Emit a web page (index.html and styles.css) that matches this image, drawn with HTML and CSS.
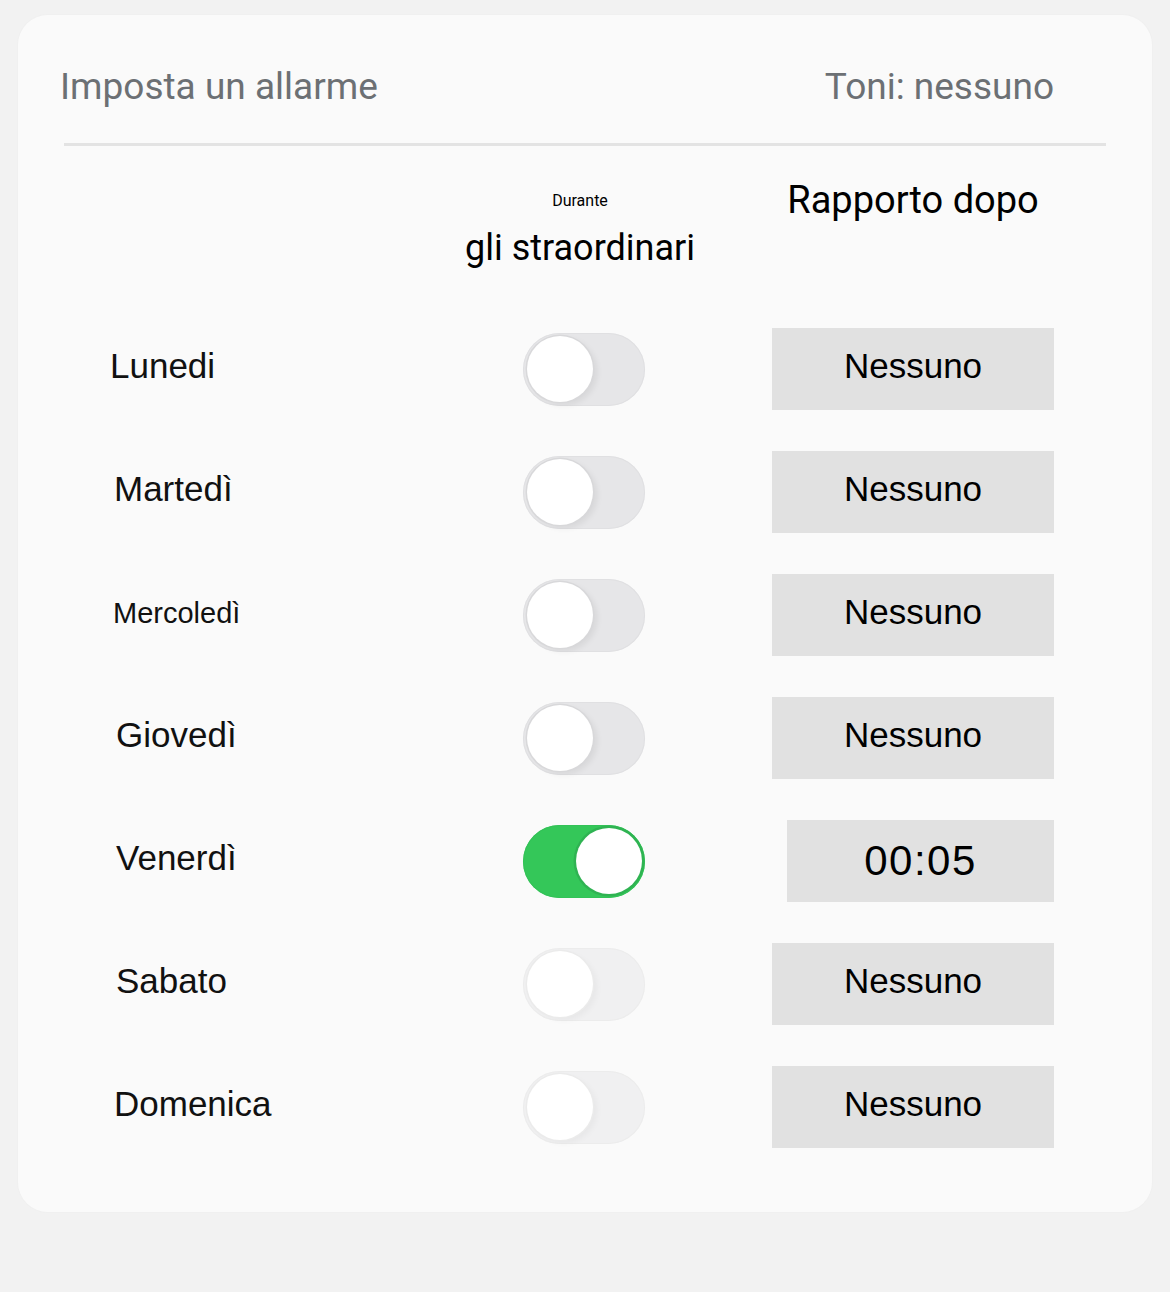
FILE: index.html
```html
<!DOCTYPE html>
<html lang="it">
<head>
<meta charset="utf-8">
<title>Imposta un allarme</title>
<link rel="stylesheet" href="styles.css">
</head>
<body>
<main class="card">
  <header class="card-header">
    <h1 class="title">Imposta un allarme</h1>
    <span class="tones">Toni: nessuno</span>
  </header>
  <div class="divider"></div>
  <section class="table">
    <div class="head">
      <div class="head-cell head-toggle">
        <div class="head-small">Durante</div>
        <div class="head-large">gli straordinari</div>
      </div>
      <div class="head-cell head-report">Rapporto dopo</div>
    </div>
    <div class="rows">
      <div class="row">
        <span class="day day--lun">Lunedi</span>
        <span class="toggle"></span>
        <span class="btn">Nessuno</span>
      </div>
      <div class="row">
        <span class="day">Martedì</span>
        <span class="toggle"></span>
        <span class="btn">Nessuno</span>
      </div>
      <div class="row">
        <span class="day day--small">Mercoledì</span>
        <span class="toggle"></span>
        <span class="btn">Nessuno</span>
      </div>
      <div class="row">
        <span class="day day--wide">Giovedì</span>
        <span class="toggle"></span>
        <span class="btn">Nessuno</span>
      </div>
      <div class="row">
        <span class="day day--wide">Venerdì</span>
        <span class="toggle toggle--on"></span>
        <span class="btn btn--time">00:05</span>
      </div>
      <div class="row">
        <span class="day day--wide">Sabato</span>
        <span class="toggle toggle--faded"></span>
        <span class="btn">Nessuno</span>
      </div>
      <div class="row">
        <span class="day">Domenica</span>
        <span class="toggle toggle--faded"></span>
        <span class="btn">Nessuno</span>
      </div>
    </div>
  </section>
</main>
</body>
</html>
```

FILE: styles.css
```css
* { box-sizing: border-box; }

html, body {
  margin: 0;
  padding: 0;
}

body {
  background: #f2f2f2;
  width: 1170px;
  height: 1292px;
  padding: 15px 18px 0 18px;
  font-family: Roboto, "Liberation Sans", Arial, sans-serif;
}

.card {
  width: 1134px;
  height: 1197px;
  background: #fafafa;
  border-radius: 30px;
  box-shadow: 0 0 0 1px #f0f0f0;
}

.card-header {
  display: flex;
  justify-content: space-between;
  align-items: center;
  padding: 48px 98px 0 42px;
  height: 96px;
}

.title {
  margin: 0;
  font-weight: 400;
  font-size: 37px;
  line-height: 48px;
  color: #6c7074;
}

.tones {
  font-size: 37px;
  line-height: 48px;
  color: #6c7074;
}

.divider {
  margin: 32px 46px 0 46px;
  height: 3px;
  background: #e3e3e3;
}

.table {
  padding: 0 98px 0 96px;
}

.head {
  display: grid;
  grid-template-columns: 409px 122px 409px;
  height: 182px;
  color: #000;
}

.head-toggle {
  grid-column: 2;
  justify-self: center;
  margin-right: 8px;
  padding-top: 45px;
  text-align: center;
  white-space: nowrap;
}

.head-small {
  font-size: 16px;
  line-height: 20px;
}

.head-large {
  margin-top: 15px;
  font-size: 36px;
  line-height: 44px;
}

.head-report {
  grid-column: 3;
  justify-self: end;
  width: 282px;
  padding-top: 31px;
  text-align: center;
  font-size: 38px;
  line-height: 46px;
  white-space: nowrap;
}

.rows {
  display: flex;
  flex-direction: column;
  gap: 41px;
}

.row {
  display: grid;
  grid-template-columns: 409px 122px 409px;
  align-items: center;
  height: 82px;
}

.day {
  font-family: "Liberation Sans", Arial, sans-serif;
  font-size: 35px;
  color: #111;
  margin-bottom: 6px;
}

.day--lun { margin-left: -4px; }
.day--small { font-size: 29px; margin-left: -1px; margin-bottom: 4px; }
.day--wide { margin-left: 2px; }

.toggle {
  position: relative;
  display: block;
  width: 122px;
  height: 73px;
  border-radius: 37px;
  background: #e6e6e8;
  box-shadow: inset 0 0 0 1px #e0e0e2;
}

.toggle::after {
  content: "";
  position: absolute;
  left: 4px;
  top: 3px;
  width: 66px;
  height: 66px;
  border-radius: 50%;
  background: #ffffff;
  box-shadow: 0 0 0 1.5px #d8d8da, 4px 3px 6px rgba(0, 0, 0, 0.07);
}

.toggle--on {
  background: #34c759;
  box-shadow: inset 0 0 0 1px #33c257;
}

.toggle--on::after {
  left: auto;
  right: 3px;
  box-shadow: 0 0 0 2.5px #2fb352;
}

.toggle--faded {
  background: #f0f0f1;
  box-shadow: inset 0 0 0 1px #ececec;
}

.toggle--faded::after {
  box-shadow: 0 0 0 1.5px #ebebeb, 4px 3px 6px rgba(0, 0, 0, 0.04);
}

.btn {
  justify-self: end;
  display: flex;
  align-items: center;
  justify-content: center;
  width: 282px;
  height: 82px;
  padding-bottom: 6px;
  background: #e1e1e1;
  font-family: "Liberation Sans", Arial, sans-serif;
  font-size: 35px;
  color: #000;
}

.btn--time {
  width: 267px;
  padding-bottom: 0;
  font-size: 42px;
  letter-spacing: 1.5px;
}
```
